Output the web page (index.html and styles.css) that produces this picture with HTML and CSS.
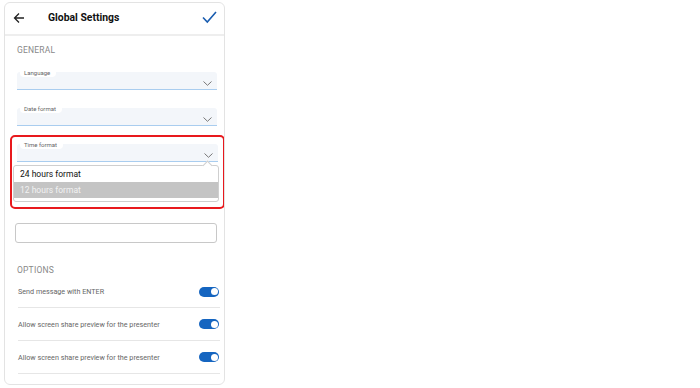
FILE: index.html
```html
<!DOCTYPE html>
<html lang="en">
<head>
    <meta charset="UTF-8">
    <meta name="viewport" content="width=device-width, initial-scale=1.0">
    <title>Global Settings</title>
    <link rel="stylesheet" href="styles.css">
</head>
<body>

    <div class="card">
        <div class="top">
            <svg class="back" width="12" height="12" viewBox="0 0 12 12">
                <path d="M11 6H1.5M6 1.5L1.5 6L6 10.5" fill="none" stroke="#222" stroke-width="1.3"/>
            </svg>
            <h1>Global Settings</h1>
            <svg class="check" width="15" height="13" viewBox="0 0 15 13">
                <path d="M1 6.5L5.3 11L14 1" fill="none" stroke="#1a5db0" stroke-width="1.6"/>
            </svg>
        </div>

        <div class="content">
            <div class="section">GENERAL</div>

            <div class="field">
                <span class="label">Language</span>
                <svg class="chev" width="9" height="5" viewBox="0 0 9 5"><path d="M0.5 0.5L4.5 4.3L8.5 0.5" fill="none" stroke="#777" stroke-width="1"/></svg>
            </div>

            <div class="field">
                <span class="label">Date format</span>
                <svg class="chev" width="9" height="5" viewBox="0 0 9 5"><path d="M0.5 0.5L4.5 4.3L8.5 0.5" fill="none" stroke="#777" stroke-width="1"/></svg>
            </div>

            <div class="highlight">
                <div class="field">
                    <span class="label">Time format</span>
                    <svg class="chev" width="9" height="5" viewBox="0 0 9 5"><path d="M0.5 0.5L4.5 4.3L8.5 0.5" fill="none" stroke="#777" stroke-width="1"/></svg>
                </div>
                <div class="menu">
                    <div class="item">24 hours format</div>
                    <div class="item selected">12 hours format</div>
                </div>
            </div>

            <div class="textbox"></div>

            <div class="section options">OPTIONS</div>

            <div class="row first">
                <span>Send message with ENTER</span>
                <span class="toggle"></span>
            </div>
            <div class="row">
                <span>Allow screen share preview for the presenter</span>
                <span class="toggle"></span>
            </div>
            <div class="row">
                <span>Allow screen share preview for the presenter</span>
                <span class="toggle"></span>
            </div>
        </div>
    </div>

</body>
</html>
```

FILE: styles.css
```css
body {
    margin: 0;
    padding: 2px 0 0 4px;
    font-family: Roboto, "Liberation Sans", sans-serif;
    background: #fff;
}
.card {
    width: 219px;
    height: 381px;
    border: 1px solid #e3e3e3;
    border-radius: 6px;
    overflow: hidden;
}
.top {
    display: flex;
    align-items: center;
    height: 31px;
    border-bottom: 2px solid #eeeeee;
    padding: 0 6px 0 8px;
}
.back {
    margin-top: -1px;
}
.top h1 {
    flex: 1;
    margin: -2px 0 0 23px;
    font-size: 10.4px;
    font-weight: 700;
    color: #111;
}
.check {
    margin: -3px 1px 0 0;
}
.content {
    padding: 0 7px 0 12px;
}
.section {
    margin-top: 8px;
    font-size: 8.5px;
    letter-spacing: 0.2px;
    color: #888;
    height: 12px;
    line-height: 12px;
}
.field {
    position: relative;
    height: 17px;
    margin-top: 16px;
    background: #f3f6fa;
    border-bottom: 1px solid #a9cdef;
    border-radius: 3px 3px 0 0;
}
.field + .field {
    margin-top: 18px;
}
.label {
    position: absolute;
    left: 3px;
    top: -3px;
    padding: 0 6px 0 4px;
    background: #fff;
    border-radius: 4px;
    font-size: 6px;
    line-height: 8px;
    color: #666;
}
.chev {
    position: absolute;
    right: 5px;
    top: 9px;
}
.highlight {
    margin: 9px -8px 0 -7px;
    padding: 0 4px 5px 1px;
    border: 2px solid #e8191d;
    border-radius: 5px;
}
.highlight .field {
    margin: 7px 1px 0 4px;
}
.menu {
    position: relative;
    margin-top: 3px;
    border: 1px solid #cfcfcf;
    border-radius: 3px;
    padding: 0 0 3px;
    background: #fff;
}
.menu::before {
    content: "";
    position: absolute;
    right: 7px;
    top: -4px;
    width: 6px;
    height: 6px;
    background: #fff;
    border-left: 1px solid #cfcfcf;
    border-top: 1px solid #cfcfcf;
    transform: rotate(45deg);
}
.item {
    position: relative;
    height: 16px;
    line-height: 16px;
    padding-left: 6px;
    font-size: 8.5px;
    color: #111;
}
.item.selected {
    background: #c4c4c4;
    color: #f2f2f2;
}
.textbox {
    margin: 14px 0 0 -2px;
    height: 18px;
    border: 1px solid #c8c8c8;
    border-radius: 3px;
}
.options {
    margin-top: 21px;
}
.row {
    display: flex;
    align-items: center;
    justify-content: space-between;
    height: 32px;
    margin-left: 1px;
    margin-right: -3px;
    border-bottom: 1px solid #e6e6e6;
    font-size: 7.2px;
    color: #666;
}
.row.first {
    height: 31px;
}
.toggle {
    position: relative;
    width: 20px;
    height: 10px;
    margin-right: 1px;
    border-radius: 5px;
    background: #1565c0;
}
.toggle::after {
    content: "";
    position: absolute;
    right: 1.5px;
    top: 1.5px;
    width: 7px;
    height: 7px;
    border-radius: 50%;
    background: #fff;
}
```
